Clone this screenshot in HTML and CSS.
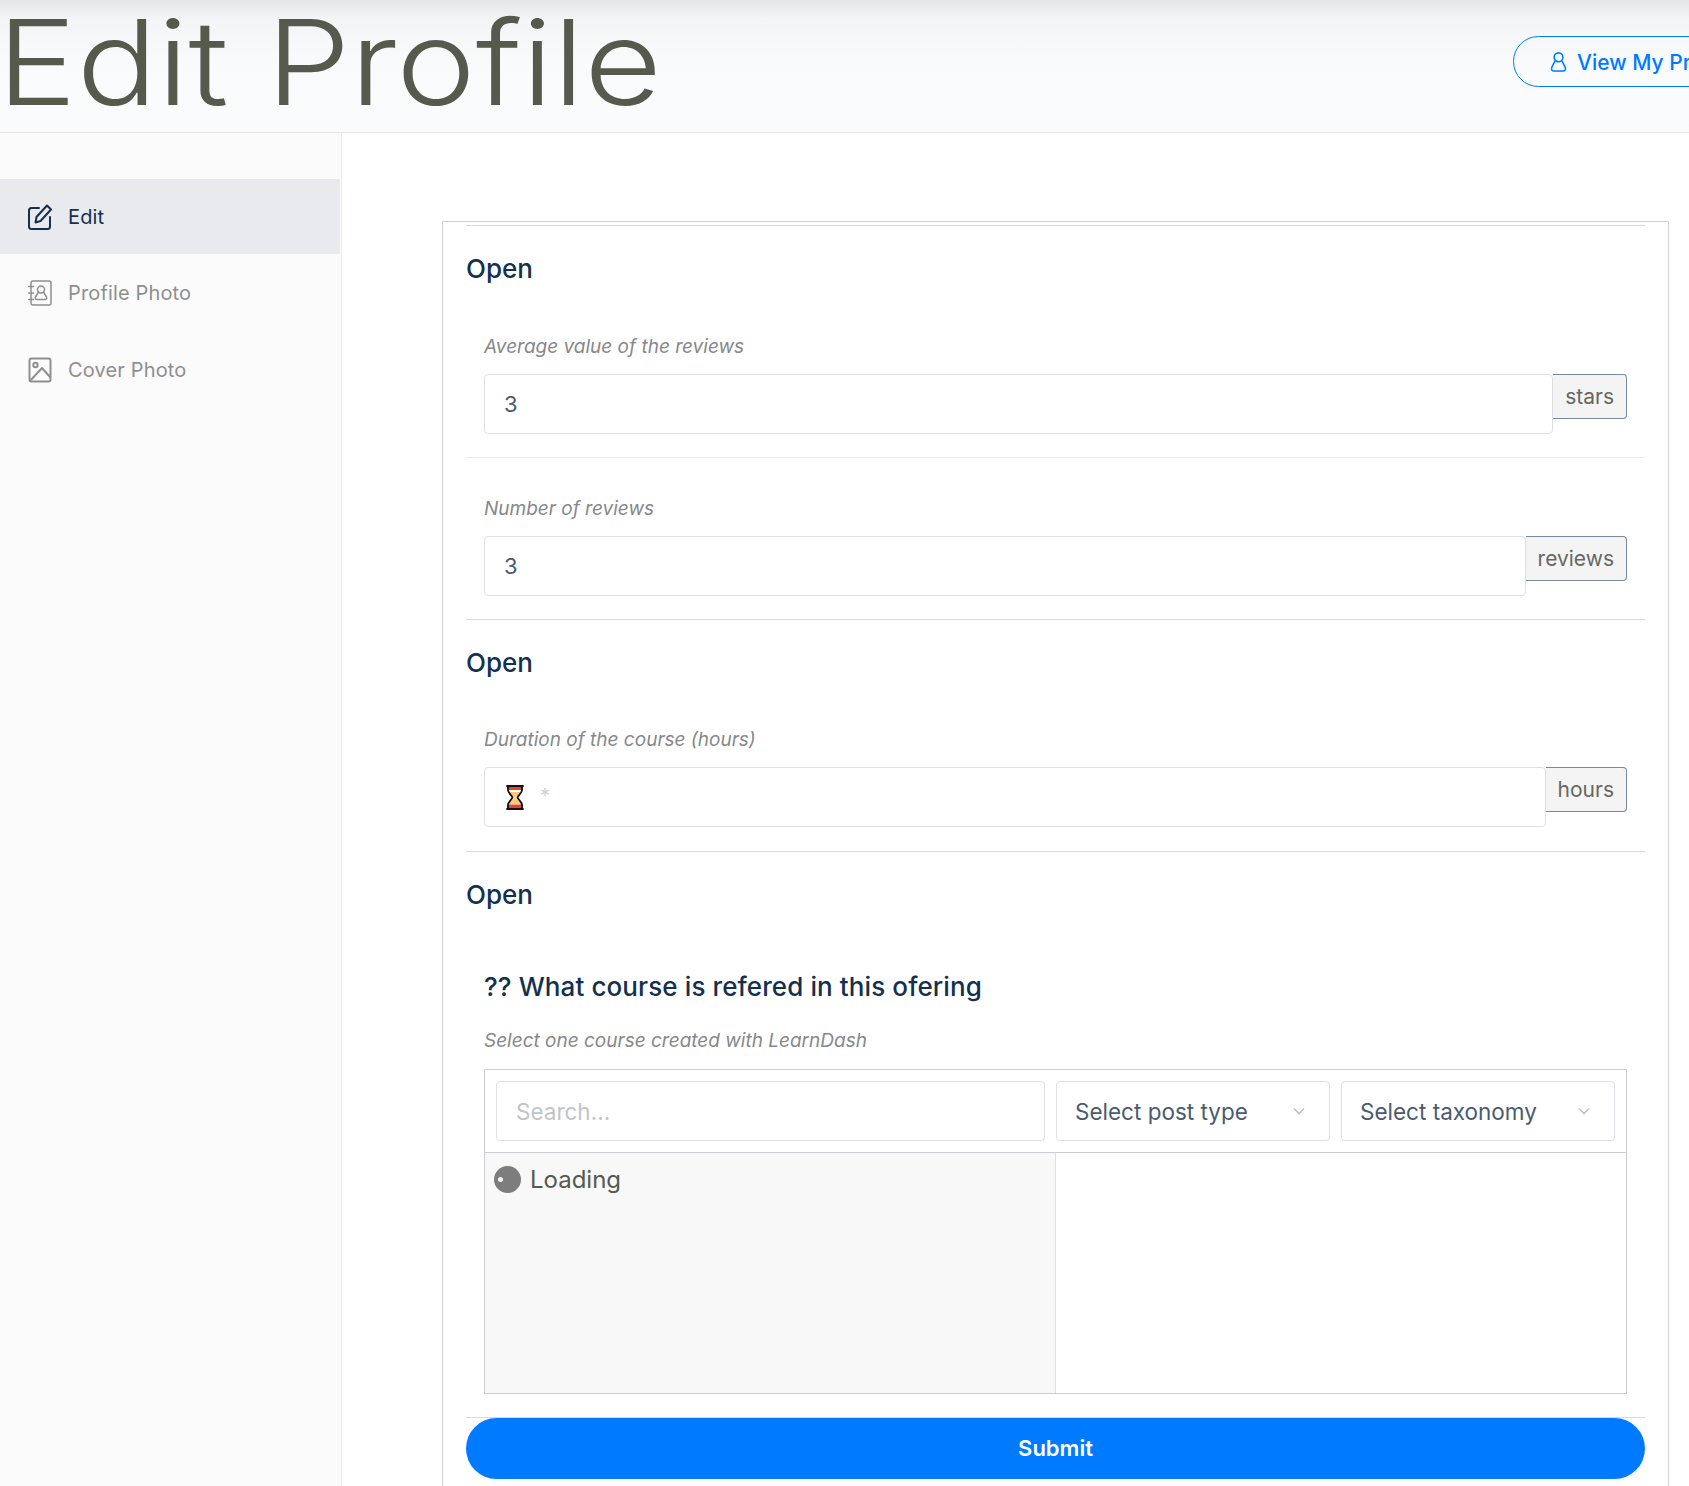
FILE: index.html
```html
<!DOCTYPE html>
<html lang="en">
<head>
<meta charset="utf-8">
<title>Edit Profile</title>
<link rel="stylesheet" href="styles.css">
</head>
<body>
<header class="top">
  <h1 class="title">Edit Profile</h1>
  <a class="view-btn" href="#">
    <svg class="view-icon" viewBox="0 0 16 20" fill="none" stroke="currentColor" stroke-width="1.5"><circle cx="8" cy="6" r="4.2"/><path d="M4.7 9.5 1.6 15.5c-.6 1.4 0 3.5 1.6 3.5h9.6c1.6 0 2.2-2.1 1.6-3.5l-3.1-6"/></svg>
    <span>View My Profile</span>
  </a>
</header>
<div class="layout">
  <nav class="side">
    <a class="side-item active" href="#">
      <svg class="side-icon" viewBox="0 0 24 26" fill="none" stroke="currentColor" stroke-width="2" stroke-linecap="round" stroke-linejoin="round"><path d="M11 4H3.500C2 4 1 5 1 6.500v16C1 24 2 25 3.500 25h16c1.500 0 2.500-1 2.500-2.500V13"/><path d="M19 1.500 23 5.500 12.500 17 7.500 18.500 8.500 13z"/></svg>
      <span>Edit</span>
    </a>
    <a class="side-item" href="#">
      <svg class="side-icon" viewBox="0 0 24 26" fill="none" stroke="currentColor" stroke-width="1.500" stroke-linecap="round" stroke-linejoin="round"><rect x="3" y="1" width="20" height="24" rx="2"/><circle cx="13" cy="9.500" r="3.500"/><path d="M10.500 12 7.500 17c-.5 1.500 0 2.500 1.500 2.500h8c1.500 0 2-1 1.500-2.500l-3-5"/><path d="M.5 6.500h5M.5 13h5M.5 19.500h5"/></svg>
      <span>Profile Photo</span>
    </a>
    <a class="side-item" href="#">
      <svg class="side-icon" viewBox="0 0 24 26" fill="none" stroke="currentColor" stroke-width="2" stroke-linejoin="round"><rect x="1.500" y="1.500" width="21" height="23" rx="2"/><circle cx="7.500" cy="8" r="2.200"/><path d="M1.500 24.500 14 11l8.500 9.500"/></svg>
      <span>Cover Photo</span>
    </a>
  </nav>
  <main class="content">
    <form class="card">
      <div class="section section-first">
        <h2 class="open">Open</h2>
        <div class="group group-a">
          <p class="label">Average value of the reviews</p>
          <div class="input-row">
            <input class="field" type="text" value="3">
            <span class="addon">stars</span>
          </div>
        </div>
        <div class="group group-b">
          <p class="label">Number of reviews</p>
          <div class="input-row">
            <input class="field" type="text" value="3">
            <span class="addon">reviews</span>
          </div>
        </div>
      </div>
      <div class="section section-second">
        <h2 class="open">Open</h2>
        <div class="group group-c">
          <p class="label">Duration of the course (hours)</p>
          <div class="input-row">
            <div class="field field-duration">
              <svg class="hourglass" viewBox="0 0 18 25"><path d="M1.500 1h15v4c0 3-3.500 5-4.500 7.500 1 2.500 4.500 4.500 4.500 7.500v4h-15v-4c0-3 3.500-5 4.500-7.500C5 10 1.500 8 1.500 5z" fill="#fff"/><path d="M3 7h12c-1 2-3.500 3.500-5 5.500h-2C6.500 10.500 4 9 3 7zM8 13h2c1.500 2 3.500 3.500 4.500 6h-11c1-2.500 3-4 4.500-6z" fill="#fdc972"/><path d="M1.500 1.500h15v3.500h-15zM1.500 19.500h15V23.500h-15z" fill="#e8412c"/><path d="M1 1h16M1 24h16M2 1v4c0 3 3.500 5 4.500 7.500C5.500 15 2 17 2 20v4M16 1v4c0 3-3.500 5-4.500 7.500 1 2.500 4.500 4.500 4.500 7.500v4" fill="none" stroke="#111" stroke-width="1.800" stroke-linecap="round"/></svg>
              <span class="asterisk">*</span>
            </div>
            <span class="addon">hours</span>
          </div>
        </div>
      </div>
      <div class="section section-last">
        <h2 class="open">Open</h2>
        <div class="group group-d">
          <h3 class="question">?? What course is refered in this ofering</h3>
          <p class="label">Select one course created with LearnDash</p>
          <div class="picker">
            <div class="toolbar">
              <input class="search" type="text" placeholder="Search...">
              <div class="select"><span>Select post type</span><svg class="chevron" viewBox="0 0 12 8" fill="none" stroke="currentColor" stroke-width="1.600"><path d="M1 1.500 6 6.500l5-5"/></svg></div>
              <div class="select"><span>Select taxonomy</span><svg class="chevron" viewBox="0 0 12 8" fill="none" stroke="currentColor" stroke-width="1.600"><path d="M1 1.500 6 6.500l5-5"/></svg></div>
            </div>
            <div class="lists">
              <div class="list-left">
                <span class="spinner"></span>
                <span class="loading">Loading</span>
              </div>
              <div class="list-right"></div>
            </div>
          </div>
        </div>
      </div>
      <div class="actions">
        <button class="submit" type="button">Submit</button>
      </div>
    </form>
  </main>
</div>
</body>
</html>
```
FILE: styles.css
```css
* { box-sizing: border-box; }
html, body { margin: 0; padding: 0; height: 1486px; overflow: hidden; background: #fff; }
body { font-family: Inter, "Liberation Sans", sans-serif; color: #5a5f52; }

.top {
  height: 133px;
  display: flex;
  align-items: center;
  justify-content: space-between;
  border-bottom: 1px solid #e6e7ea;
  background: linear-gradient(#e4e5e7 0, #f3f4f6 18px, #f9fafc 60px, #fafbfd 100%);
}
.title {
  margin: 0 0 8px -3px;
  font-family: Inter, sans-serif;
  font-weight: 300;
  font-size: 118px;
  line-height: 124px;
  color: #565a4d;
  white-space: nowrap;
  transform: scaleX(1.135);
  transform-origin: left center;
}
.view-btn {
  flex: 0 0 260px;
  height: 51px;
  margin: 0 -84px 9px 0;
  padding: 1px 0 0 36px;
  display: flex;
  align-items: center;
  gap: 10px;
  border: 1px solid #007bff;
  border-radius: 26px;
  color: #007bff;
  text-decoration: none;
  font-size: 21px;
  font-weight: 500;
  white-space: nowrap;
}
.view-icon { width: 17px; height: 21px; flex: none; margin-top: -1px; }

.layout { display: flex; height: 1353px; }
.side {
  width: 342px;
  flex: none;
  padding: 46px 1px 0 0;
  background: #fbfbfc;
  border-right: 1px solid #eaebee;
}
.side-item {
  height: 77px;
  padding-left: 28px;
  display: flex;
  align-items: center;
  gap: 16px;
  color: #8f8f8f;
  text-decoration: none;
  font-size: 20px;
  letter-spacing: 0.150px;
}
.side-item.active { height: 75px; background: #e9eaee; color: #14304f; }
.side-icon { width: 24px; height: 26px; flex: none; }

.content { flex: 1; min-width: 0; padding: 88px 20px 0 100px; }
.card {
  min-height: 1400px;
  padding: 3px 23px 0 23px;
  border: 1px solid #d2d3d6;
}
.section { border-top: 1px solid #d8d9dc; }
.section-first { height: 394px; }
.section-second { height: 232px; }
.section-last { height: 566px; }
.open {
  margin: 0;
  padding-top: 28px;
  font-size: 26px;
  line-height: 30px;
  font-weight: 500;
  color: #14304f;
}
.group { padding: 0 18px; }
.group-a { margin-top: 50px; height: 124px; border-bottom: 1px solid #ececee; }
.group-b { margin-top: 38px; }
.group-c { margin-top: 49px; }
.group-d { margin-top: 61px; }
.label {
  margin: 0 0 14px;
  font-size: 19px;
  line-height: 26px;
  font-style: italic;
  color: #86888a;
}
.group-d .label { margin-bottom: 15px; }
.input-row { display: flex; align-items: flex-start; }
.field {
  flex: 1;
  min-width: 0;
  height: 60px;
  padding: 0 19px;
  border: 1px solid #dedfe3;
  border-radius: 4px;
  font: 22px Inter, sans-serif;
  color: #4a5b70;
  background: #fff;
  outline: 0;
}
.field-duration { display: flex; align-items: center; gap: 16px; padding-left: 21px; }
.hourglass { width: 18px; height: 25px; flex: none; }
.asterisk { color: #cfd1d6; font-size: 20px; line-height: 20px; margin-top: -3px; }
.addon {
  flex: none;
  height: 45px;
  padding: 0 12px;
  display: flex;
  align-items: center;
  background: #f4f4f5;
  border: 1px solid #7a8a9c;
  border-left: 0;
  border-radius: 0 4px 4px 0;
  font-size: 21px;
  color: #666860;
}
.question {
  margin: 0 0 25px;
  font-size: 26px;
  line-height: 32px;
  font-weight: 500;
  letter-spacing: 0.100px;
  color: #14304f;
}
.picker { height: 325px; border: 1px solid #cdcdd2; display: flex; flex-direction: column; }
.toolbar {
  height: 83px;
  flex: none;
  padding: 11px;
  display: grid;
  grid-template-columns: 549px 274px 274px;
  column-gap: 11px;
  border-bottom: 1px solid #cdcdd2;
}
.search, .select {
  height: 60px;
  border: 1px solid #dedfe3;
  border-radius: 4px;
  background: #fff;
  font: 22.500px Inter, sans-serif;
  outline: 0;
}
.search { padding: 0 19px; width: 100%; }
.search::placeholder { color: #c0c4ca; opacity: 1; }
.select {
  padding: 0 24px 0 18px;
  display: flex;
  align-items: center;
  justify-content: space-between;
  color: #4a5b70;
}
.chevron { width: 12px; height: 8px; color: #bcc2ca; flex: none; }
.lists { flex: 1; display: flex; min-height: 0; }
.list-left {
  width: 571px;
  flex: none;
  padding: 13px 0 0 9px;
  display: flex;
  align-items: flex-start;
  gap: 9px;
  background: #f8f8f9;
  border-right: 1px solid #dfe0e3;
}
.list-right { flex: 1; }
.spinner {
  position: relative;
  width: 27px;
  height: 27px;
  flex: none;
  border-radius: 50%;
  background: #7d7d7d;
}
.spinner::after {
  content: "";
  position: absolute;
  left: 4px;
  top: 11px;
  width: 5px;
  height: 5px;
  border-radius: 50%;
  background: #f4f4f4;
}
.loading { font-size: 24px; line-height: 27px; color: #555a4e; }
.actions { border-top: 1px solid #d8d9dc; }
.submit {
  display: block;
  width: 100%;
  height: 61px;
  padding-bottom: 3px;
  border: 0;
  border-radius: 31px;
  background: #007bff;
  color: #fff;
  font: 600 22px Inter, sans-serif;
}
```
